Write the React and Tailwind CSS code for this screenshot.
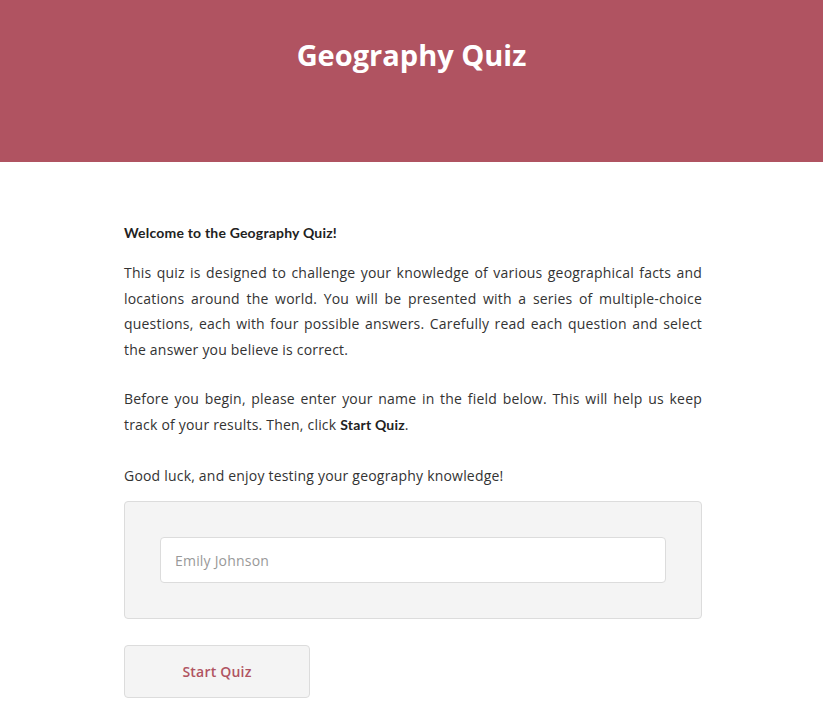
export default function App() {
  return (
    <div className="min-h-screen bg-white text-[#333] tracking-[0.2px]" style={{ fontFamily: '"Open Sans", sans-serif' }}>
      <header className="bg-[#b05361] h-[162px] pt-[33px]">
        <h1 className="text-center text-white text-[29px] font-bold leading-[44px] tracking-normal">Geography Quiz</h1>
      </header>

      <main className="w-[578px] ml-[124px] pt-[62px]">
        <p className="text-[14px] font-bold leading-[18px] text-[#222]" style={{ fontFamily: 'Lato, sans-serif' }}>
          Welcome to the Geography Quiz!
        </p>
        <p className="mt-[18px] text-[14px] leading-[25.6px] text-justify">
          This quiz is designed to challenge your knowledge of various geographical facts and locations around the world. You will be presented with a series of multiple-choice questions, each with four possible answers. Carefully read each question and select the answer you believe is correct.
        </p>
        <p className="mt-[24px] text-[14px] leading-[25.6px] text-justify">
          Before you begin, please enter your name in the field below. This will help us keep track of your results. Then, click{' '}
          <strong className="font-bold text-[#222]" style={{ fontFamily: 'Lato, sans-serif' }}>Start Quiz</strong>.
        </p>
        <p className="mt-[25px] text-[14px] leading-[25.6px]">Good luck, and enjoy testing your geography knowledge!</p>

        <div className="mt-[13px] bg-[#f4f4f4] border border-[#dcdcdc] rounded-[4px] px-[35px] py-[35px]">
          <input
            type="text"
            placeholder="Emily Johnson"
            className="block w-full h-[46px] bg-white border border-[#dcdcdc] rounded-[4px] px-[14px] text-[14px] placeholder:text-[#999] outline-none"
          />
        </div>

        <button className="mt-[26px] w-[186px] h-[53px] bg-[#f4f4f4] border border-[#dcdcdc] rounded-[4px] text-[14px] font-semibold text-[#b05361]">
          Start Quiz
        </button>
      </main>
    </div>
  );
}
